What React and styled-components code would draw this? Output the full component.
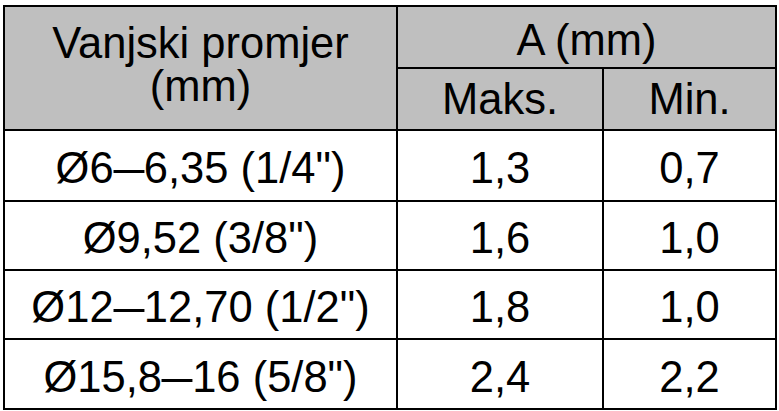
import React from "react";
import styled, { createGlobalStyle } from "styled-components";

const GlobalStyle = createGlobalStyle`
  body {
    margin: 0;
    background: #fff;
    font-family: "Liberation Sans", Arial, sans-serif;
  }
`;

const rows = [
  { size: ["Ø6", "6,35 (1/4\")"], max: "1,3", min: "0,7", h: 71 },
  { size: ["Ø9,52 (3/8\")"], max: "1,6", min: "1,0", h: 69 },
  { size: ["Ø12", "12,70 (1/2\")"], max: "1,8", min: "1,0", h: 69 },
  { size: ["Ø15,8", "16 (5/8\")"], max: "2,4", min: "2,2", h: 70 },
];

const Page = styled.div`
  padding: 5px 0 0 3px;
`;

const Table = styled.table`
  border-collapse: collapse;
  table-layout: fixed;
  width: 772px;
  border: 2.5px solid #000;
  color: #000;
  font-size: 43.5px;
  line-height: 43px;
`;

const HeadCell = styled.th`
  background: #bfbfbf;
  border: 2px solid #000;
  font-weight: normal;
  text-align: center;
  vertical-align: middle;
  padding: ${(p) => p.$pad || "0"};
  height: ${(p) => p.$h || 60}px;
`;

const HeadLine = styled.span`
  display: block;
  line-height: 43px;
  height: 43px;
  overflow: visible;
`;

const Cell = styled.td`
  border: 2px solid #000;
  text-align: center;
  vertical-align: middle;
  padding: 6px 0 0;
  white-space: nowrap;
`;

const Row = styled.tr`
  height: ${(p) => p.$h}px;
`;

const Dash = styled.span`
  display: inline-block;
  transform: scaleX(1.28);
  margin: 0 3px;
`;

const Size = ({ parts }) =>
  parts.length > 1 ? (
    <>
      {parts[0]}
      <Dash>–</Dash>
      {parts[1]}
    </>
  ) : (
    parts[0]
  );

const App = () => (
  <Page>
    <GlobalStyle />
    <Table>
      <colgroup>
        <col style={{ width: 393 }} />
        <col style={{ width: 206 }} />
        <col style={{ width: 173 }} />
      </colgroup>
      <thead>
        <tr>
          <HeadCell rowSpan={2} $h={114} $pad="0 0 6px">
            <HeadLine>Vanjski promjer</HeadLine>
            <HeadLine>(mm)</HeadLine>
          </HeadCell>
          <HeadCell colSpan={2} $h={54} $pad="6px 0 0">A (mm)</HeadCell>
        </tr>
        <tr>
          <HeadCell $h={60}>Maks.</HeadCell>
          <HeadCell $h={60}>Min.</HeadCell>
        </tr>
      </thead>
      <tbody>
        {rows.map((r) => (
          <Row key={r.max + r.min + r.h + r.size[0]} $h={r.h}>
            <Cell>
              <Size parts={r.size} />
            </Cell>
            <Cell>{r.max}</Cell>
            <Cell>{r.min}</Cell>
          </Row>
        ))}
      </tbody>
    </Table>
  </Page>
);

export default App;
